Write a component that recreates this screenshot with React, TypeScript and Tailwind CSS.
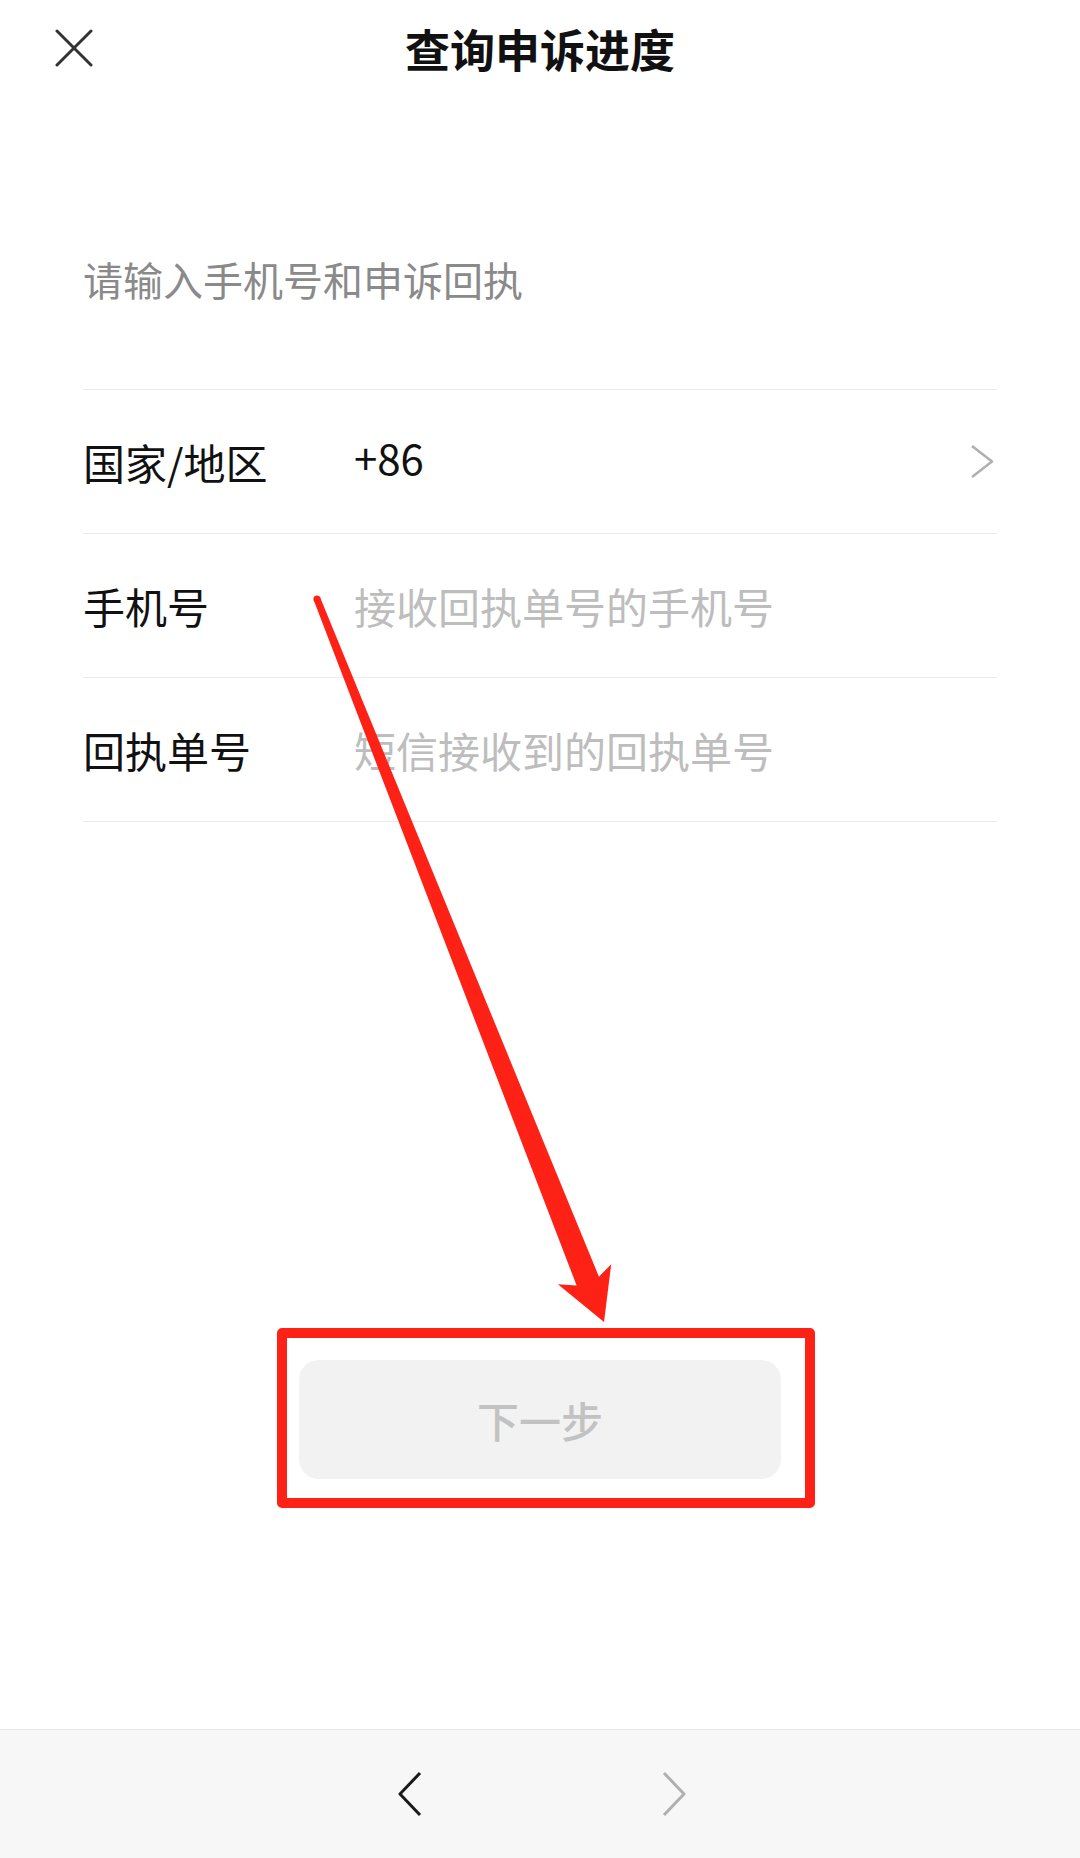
const FONT = { fontFamily: '"Noto Sans CJK SC", "Noto Sans", sans-serif' }

const ROWS = [
  { label: '国家/地区', value: '+86', placeholder: false, arrow: true },
  { label: '手机号', value: '接收回执单号的手机号', placeholder: true, arrow: false },
  { label: '回执单号', value: '短信接收到的回执单号', placeholder: true, arrow: false },
]

// 標注 (赤い矢印) — 先端 T, 軸方向 a, 法線 p
function Annotation() {
  const T = [604, 1322]
  const S = [317, 599]
  const len = Math.hypot(T[0] - S[0], T[1] - S[1])
  const a = [(T[0] - S[0]) / len, (T[1] - S[1]) / len]
  const p = [a[1], -a[0]]
  const at = (along: number, side: number) =>
    `${T[0] + a[0] * along + p[0] * side},${T[1] + a[1] * along + p[1] * side}`
  const start = (side: number) => `${S[0] + p[0] * side},${S[1] + p[1] * side}`
  const points = [
    start(-3.5),
    at(-44, -12),
    at(-52, -29),
    at(0, 0),
    at(-51, 28),
    at(-44, 12),
    start(3.5),
  ].join(' ')
  return (
    <svg className="absolute inset-0 pointer-events-none" width={1080} height={1858} viewBox="0 0 1080 1858">
      <polygon points={points} fill="#fe2216" />
      <circle cx={S[0]} cy={S[1]} r={3.6} fill="#fe2216" />
    </svg>
  )
}

export default function App() {
  return (
    <div className="relative w-[1080px] min-h-[1858px] bg-white flex flex-col overflow-hidden" style={FONT}>
      {/* ヘッダー */}
      <div className="h-[96px] grid grid-cols-[1fr_auto_1fr] items-center">
        <div className="pl-[55px] flex items-center">
          <svg width={38} height={38} viewBox="0 0 38 38">
            <path d="M2 2 L36 36 M36 2 L2 36" stroke="#333" strokeWidth={3} strokeLinecap="round" fill="none" />
          </svg>
        </div>
        <div className="text-[45px] leading-none font-semibold text-[#111]">查询申诉进度</div>
        <div />
      </div>

      <div className="px-[83px]">
        <div className="mt-[159px] text-[40px] leading-[48px] text-[#8a8a8a]">请输入手机号和申诉回执</div>

        <div className="mt-[86px] border-t-[1.5px] border-[#ececec]">
          {ROWS.map((r) => (
            <div key={r.label} className="h-[144px] flex items-center border-b-[1.5px] border-[#ececec]">
              <span className="w-[271px] shrink-0 text-[42px] leading-none text-[#111]">{r.label}</span>
              <span
                className={
                  r.placeholder
                    ? 'flex-1 text-[42px] leading-none text-[#bdbdbd]'
                    : 'flex-1 text-[42px] leading-none text-[#111] mb-[10px]'
                }
              >
                {r.value}
              </span>
              {r.arrow && (
                <svg width={25} height={35} viewBox="0 0 25 35" className="mr-[2px]">
                  <polyline points="2,2 22,17.5 2,33" fill="none" stroke="#b0b0b0" strokeWidth={2.6} strokeLinejoin="round" />
                </svg>
              )}
            </div>
          ))}
        </div>
      </div>

      {/* 下一步 */}
      <div className="mt-[538px] flex justify-center">
        <button className="w-[482px] h-[119px] rounded-[20px] bg-[#f2f2f2] text-[42px] font-medium text-[#c2c2c2] leading-none">
          下一步
        </button>
      </div>

      {/* ボトムバー */}
      <div className="mt-auto h-[129px] bg-[#f7f7f7] border-t-[1.5px] border-[#e6e6e6] flex items-center justify-center gap-[240px] pl-[4px]">
        <svg width={24} height={46} viewBox="0 0 24 46">
          <polyline points="22,2 2,23 22,44" fill="none" stroke="#1a1a1a" strokeWidth={3} strokeLinejoin="round" />
        </svg>
        <svg width={24} height={46} viewBox="0 0 24 46">
          <polyline points="2,2 22,23 2,44" fill="none" stroke="#b0b0b0" strokeWidth={3} strokeLinejoin="round" />
        </svg>
      </div>

      {/* 標注 */}
      <div className="absolute left-[277px] top-[1328px] w-[538px] h-[180px] border-[10px] border-[#fe2216] rounded-[5px] pointer-events-none" />
      <Annotation />
    </div>
  )
}
